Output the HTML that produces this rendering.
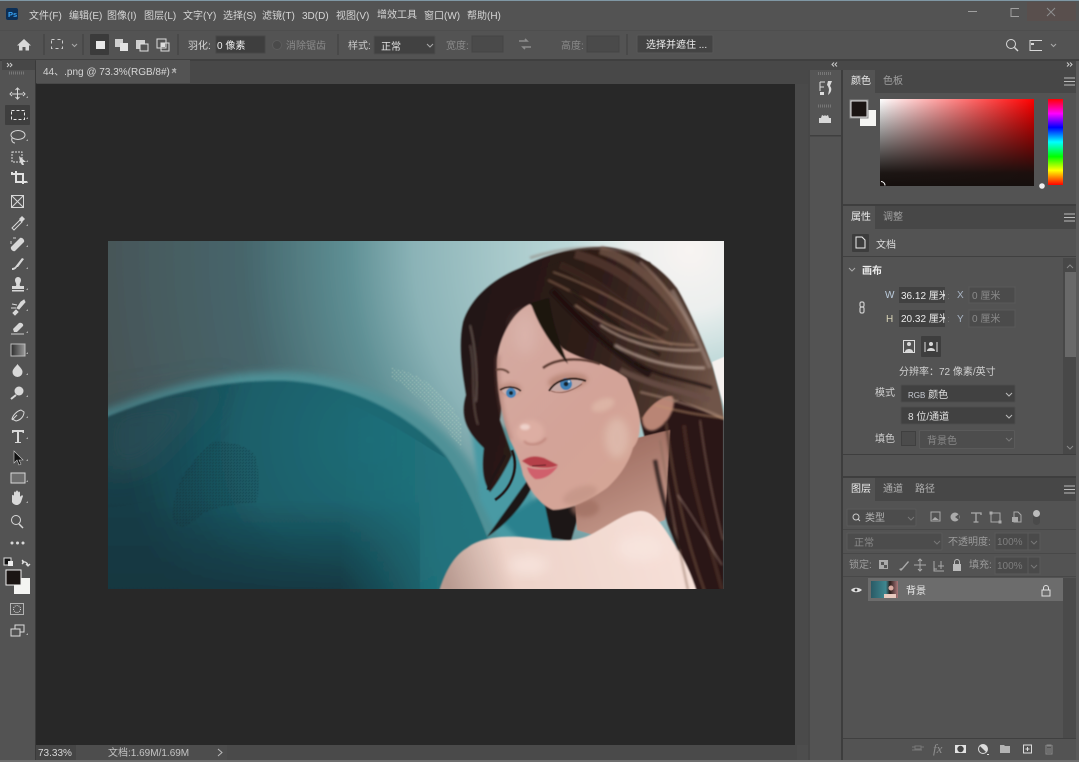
<!DOCTYPE html>
<html lang="zh"><head><meta charset="utf-8"><title>Photoshop</title>
<style>
html,body{margin:0;padding:0;background:#535353;overflow:hidden}
svg{display:block;position:absolute;left:0;top:0}
text{font-family:"Liberation Sans","Noto Sans CJK SC",sans-serif;font-size:10px;fill:#d6d6d6}
.d{fill:#8a8a8a}.w{fill:#ececec}
.s{fill:none;stroke:#d8d8d8;stroke-width:1}
.f{fill:#d8d8d8}
</style></head><body>
<svg width="1079" height="762" viewBox="0 0 1079 762" xmlns="http://www.w3.org/2000/svg">
<defs>
<clipPath id="c"><rect x="108" y="241" width="616" height="348"/></clipPath>
<radialGradient id="bg" gradientUnits="userSpaceOnUse" cx="690" cy="250" r="600">
<stop offset="0" stop-color="#f8f4f2"/><stop offset=".1" stop-color="#ecefee"/><stop offset=".2" stop-color="#bcd8d8"/><stop offset=".33" stop-color="#a4c6c8"/><stop offset=".46" stop-color="#8bb3b7"/><stop offset=".57" stop-color="#5e8f94"/><stop offset=".74" stop-color="#46666c"/><stop offset="1" stop-color="#465456"/></radialGradient>
<radialGradient id="bl" gradientUnits="userSpaceOnUse" cx="370" cy="440" r="250"><stop offset="0" stop-color="#1e6c76"/><stop offset=".5" stop-color="#1b5f6a"/><stop offset=".8" stop-color="#174a55"/><stop offset="1" stop-color="#143c46"/></radialGradient>
<linearGradient id="skin" x1="500" y1="340" x2="640" y2="480" gradientUnits="userSpaceOnUse"><stop offset="0" stop-color="#d4aaa1"/><stop offset=".55" stop-color="#d3a398"/><stop offset="1" stop-color="#d4a696"/></linearGradient>
<linearGradient id="sh" x1="450" y1="590" x2="670" y2="520" gradientUnits="userSpaceOnUse"><stop offset="0" stop-color="#b89a90"/><stop offset=".28" stop-color="#eed3c9"/><stop offset="1" stop-color="#f6e0d8"/></linearGradient>
<linearGradient id="neck" x1="600" y1="440" x2="640" y2="530" gradientUnits="userSpaceOnUse"><stop offset="0" stop-color="#9c6a5e"/><stop offset="1" stop-color="#c4988a"/></linearGradient>
<linearGradient id="hair" gradientUnits="userSpaceOnUse" x1="470" y1="300" x2="720" y2="360"><stop offset="0" stop-color="#231513"/><stop offset=".5" stop-color="#2f1e1a"/><stop offset=".8" stop-color="#4c362d"/><stop offset="1" stop-color="#705548"/></linearGradient>
<linearGradient id="gw" x1="880" y1="0" x2="1034" y2="0" gradientUnits="userSpaceOnUse"><stop offset="0" stop-color="#fff"/><stop offset="1" stop-color="#f00"/></linearGradient>
<linearGradient id="gb" x1="0" y1="99" x2="0" y2="186" gradientUnits="userSpaceOnUse"><stop offset="0" stop-color="#000" stop-opacity="0"/><stop offset=".85" stop-color="#150f0d" stop-opacity=".97"/><stop offset="1" stop-color="#150f0d"/></linearGradient>
<linearGradient id="hue" x1="0" y1="99" x2="0" y2="185" gradientUnits="userSpaceOnUse"><stop offset="0" stop-color="#f00"/><stop offset=".17" stop-color="#f0f"/><stop offset=".33" stop-color="#00f"/><stop offset=".5" stop-color="#0ff"/><stop offset=".67" stop-color="#0f0"/><stop offset=".83" stop-color="#ff0"/><stop offset="1" stop-color="#f00"/></linearGradient>
<linearGradient id="tg" x1="0" x2="1" y1="0" y2="0"><stop offset="0" stop-color="#2c2c2c"/><stop offset="1" stop-color="#9a9a9a"/></linearGradient>
<linearGradient id="th" x1="0" x2="1" y1="0" y2="0"><stop offset="0" stop-color="#2a5b66"/><stop offset=".55" stop-color="#3e8790"/><stop offset=".7" stop-color="#2c1e1c"/><stop offset="1" stop-color="#a8787a"/></linearGradient>
<linearGradient id="bot" x1="0" x2="0" y1="500" y2="589" gradientUnits="userSpaceOnUse"><stop offset="0" stop-color="#123640" stop-opacity="0"/><stop offset="1" stop-color="#123640" stop-opacity=".9"/></linearGradient>
<linearGradient id="rt" x1="340" x2="510" y1="0" y2="0" gradientUnits="userSpaceOnUse"><stop offset="0" stop-color="#22757f" stop-opacity="0"/><stop offset=".6" stop-color="#22757f" stop-opacity=".85"/><stop offset="1" stop-color="#22757f"/></linearGradient>
<filter id="b03" x="-5%" y="-5%" width="110%" height="110%"><feGaussianBlur stdDeviation=".4"/></filter>
<filter id="b1" x="-20%" y="-20%" width="140%" height="140%"><feGaussianBlur stdDeviation="1"/></filter>
<filter id="b05" x="-20%" y="-20%" width="140%" height="140%"><feGaussianBlur stdDeviation=".55"/></filter>
<filter id="b2" x="-30%" y="-30%" width="160%" height="160%"><feGaussianBlur stdDeviation="2.2"/></filter>
<filter id="b4" x="-50%" y="-50%" width="200%" height="200%"><feGaussianBlur stdDeviation="4"/></filter>
<filter id="b6" x="-30%" y="-30%" width="160%" height="160%"><feGaussianBlur stdDeviation="6"/></filter>
<filter id="b12" x="-30%" y="-30%" width="160%" height="160%"><feGaussianBlur stdDeviation="14"/></filter>
<pattern id="dots" width="4" height="4" patternUnits="userSpaceOnUse"><rect x="0" y="0" width="1" height="1" fill="#e4f4d4"/><rect x="2" y="2" width="1" height="1" fill="#c8f0c8"/></pattern>
<pattern id="dk" width="3" height="3" patternUnits="userSpaceOnUse"><rect width="1" height="1" fill="#14242a"/><rect x="2" y="1" width="1" height="1" fill="#172e34"/></pattern>
</defs>

<!-- window -->
<rect width="1079" height="762" fill="#535353"/>
<rect width="1079" height="1" fill="#7f97a4"/>
<rect x="0" y="59" width="1079" height="2" fill="#3f3f3f"/>
<rect x="0" y="30" width="1079" height="1" fill="#4e4e4e"/>

<!-- title bar -->
<rect x="6" y="8" width="12" height="12" rx="2" fill="#0c2f56"/>
<text x="8" y="17" style="font-size:7.5px;font-weight:bold;fill:#39a4f5">Ps</text>
<text x="29" y="19">文件(F)</text><text x="69" y="19">编辑(E)</text><text x="107" y="19">图像(I)</text><text x="144" y="19">图层(L)</text><text x="183" y="19">文字(Y)</text><text x="223" y="19">选择(S)</text><text x="262" y="19">滤镜(T)</text><text x="302" y="19">3D(D)</text><text x="336" y="19">视图(V)</text><text x="377" y="18">增效工具</text><text x="424" y="19">窗口(W)</text><text x="467" y="19">帮助(H)</text>
<path d="M968 11.500h9" stroke="#a0a0a0" fill="none"/>
<path d="M1019 8.500h-8v8h8" stroke="#a0a0a0" fill="none"/>
<rect x="1027" y="2" width="49" height="19" fill="#594f4d"/>
<path d="M1047 8l8 8M1055 8l-8 8" stroke="#8e8e8e" fill="none"/>

<!-- options bar -->
<path d="M24 39l7 6.500h-2v5h-3.500v-3.500h-3v3.500H19v-5h-2z" class="f"/>
<path d="M44 34v21" stroke="#3f3f3f"/>
<rect x="51.500" y="39.500" width="11" height="9" fill="none" stroke="#ccc" stroke-dasharray="3 3"/>
<path d="M72 44l2.500 2.500 2.500-2.500" fill="none" stroke="#aaa"/>
<path d="M83 34v21" stroke="#3f3f3f"/>
<rect x="90" y="34" width="19" height="21" rx="1" fill="#3b3b3b"/>
<rect x="96" y="41" width="9" height="8" fill="#e8e8e8"/>
<rect x="115" y="39" width="8" height="8" fill="#cfcfcf"/><rect x="120" y="43" width="8" height="8" fill="#e2e2e2"/>
<rect x="136" y="40" width="9" height="9" fill="#cfcfcf"/><rect x="140" y="44" width="8" height="7" fill="#535353" stroke="#e2e2e2"/>
<rect x="157" y="39" width="9" height="9" fill="none" stroke="#ddd"/><rect x="161" y="43" width="4" height="4" fill="#ddd"/><rect x="161" y="43" width="8" height="8" fill="none" stroke="#ddd"/>
<path d="M178 34v21" stroke="#3f3f3f"/>
<text x="188" y="49">羽化:</text>
<rect x="216" y="36" width="49" height="17" fill="#3e3e3e" stroke="#474747"/>
<text x="217" y="49" style="fill:#eee">0 像素</text>
<circle cx="277" cy="45" r="4.500" fill="#4a4a4a" stroke="#5c5c5c"/>
<text x="286" y="49" class="d">消除锯齿</text>
<path d="M338 34v21" stroke="#3f3f3f"/>
<text x="348" y="49" style="fill:#ccc">样式:</text>
<rect x="374" y="36" width="61" height="18" rx="1" fill="#414141" stroke="#4d4d4d"/>
<text x="381" y="50" style="fill:#e4e4e4">正常</text>
<path d="M427 44l3 3 3-3" fill="none" stroke="#aaa"/>
<text x="446" y="49" class="d">宽度:</text>
<rect x="472" y="36" width="31" height="16" fill="#4a4a4a" stroke="#444"/>
<path d="M519 41h8l-2-2M531 47h-8l2 2" stroke="#8c8c8c" fill="none" stroke-width="1.600"/>
<text x="561" y="49" class="d">高度:</text>
<rect x="587" y="36" width="32" height="16" fill="#4a4a4a" stroke="#444"/>
<path d="M627 34v21" stroke="#3f3f3f"/>
<rect x="637" y="35" width="76" height="18" rx="1" fill="#434343" stroke="#575757"/>
<text x="646" y="48" class="w">选择并遮住 ...</text>
<circle cx="1011" cy="44" r="4.500" class="s" stroke-width="1.200"/><path d="M1014.500 47.500l3.500 3.500" stroke="#d8d8d8" stroke-width="1.400"/>
<path d="M1042 40.500h-12v10h12" stroke="#d8d8d8" fill="none"/><path d="M1031 43h3v2h-3z" class="f"/>
<path d="M1051 44l2.500 2.500 2.500-2.500" fill="none" stroke="#aaa"/>

<!-- left tool panel -->
<rect x="0" y="61" width="35" height="701" fill="#535353"/>
<rect x="2" y="60" width="33" height="10" fill="#474747"/>
<path d="M7 63l2 2-2 2M10 63l2 2-2 2" stroke="#ccc" fill="none"/>
<path d="M9 73h15" stroke="#777" stroke-dasharray="1 1" stroke-width="3"/>
<rect x="35" y="61" width="2" height="701" fill="#3a3a3a"/>

<!-- document area -->
<rect x="37" y="61" width="771" height="23" fill="#484848"/>
<rect x="36" y="60" width="154" height="23" fill="#535353"/>
<text x="43" y="75">44、.png @ 73.3%(RGB/8#) *</text>
<path d="M172 69l4 4M176 69l-4 4" stroke="#aaa" fill="none"/>
<rect x="36" y="84" width="759" height="661" fill="#282828"/>
<rect x="795" y="84" width="13" height="661" fill="#4a4a4a"/>
<rect x="36" y="745" width="772" height="15" fill="#4d4d4d"/>
<rect x="36" y="745" width="40" height="15" fill="#454545"/>
<text x="38" y="756" style="fill:#d8d8d8">73.33%</text>
<text x="108" y="756" style="fill:#c4c4c4">文档:1.69M/1.69M</text>
<path d="M218 749l4 3.500-4 3.500" stroke="#bbb" fill="none"/>
<rect x="227" y="745" width="570" height="15" fill="#4a4a4a"/>
<rect x="0" y="760" width="1079" height="2" fill="#6d6d6d"/>

<!-- painting -->
<g clip-path="url(#c)"><g filter="url(#b03)">
<rect x="100" y="235" width="630" height="360" fill="url(#bg)"/>
<path d="M100 412C170 385 230 370 290 372C360 376 425 408 460 450C485 480 505 530 525 595H100Z" fill="#4f9197" filter="url(#b4)"/>
<path d="M100 420C170 390 230 379 290 381C355 386 410 415 445 455C470 490 490 540 505 595H100Z" fill="url(#bl)" filter="url(#b1)"/>
<path d="M100 405L230 385L150 470L100 480Z" fill="#34545c" opacity=".55" filter="url(#b12)"/>
<path d="M100 500H420V595H100Z" fill="url(#bot)"/>
<path d="M340 400C390 420 430 450 446 458C470 490 490 540 505 595H340Z" fill="url(#rt)"/>
<path d="M173 518C172 495 180 470 213 442C235 440 257 450 257 462C260 480 258 495 257 502C235 505 210 505 195 520C185 530 175 528 173 518Z" fill="url(#dk)" opacity=".75"/>
<path d="M392 368C420 372 450 395 462 425L462 450C440 420 420 395 392 378Z" fill="url(#dots)" opacity=".5"/>

<!-- teal showing between strands -->
<path d="M470 420L520 430L530 490L552 545L500 540L480 500Z" fill="#4a9aa4" filter="url(#b2)"/>
<path d="M500 520L550 490L556 540L520 540Z" fill="#2a818e" filter="url(#b2)"/>

<!-- hair mass -->
<g filter="url(#b05)">
<path d="M463 322C470 300 490 280 520 268C550 252 580 246 607 247C640 250 665 272 677 288C690 310 705 345 713 368C719 390 723 405 724 420V595H697C690 570 680 545 668 525L640 420L630 400L510 345L500 420L512 455C505 470 498 482 490 492C482 480 482 465 484 448C465 430 460 415 466 395C462 370 458 345 463 322Z" fill="url(#hair)"/>
<path d="M487 537C505 525 525 505 535 480L545 505L552 538L571 541L580 510L560 495L535 470Z" fill="#1f1413"/>
<path d="M640 420L668 525L697 595H724V420L680 400Z" fill="#2a1917"/>
</g>
<path d="M470 345C476 370 470 400 478 425" stroke="#5a4a44" stroke-width="2" fill="none" filter="url(#b1)"/>
<path d="M470 325C476 350 478 380 476 402" stroke="#7a6a62" stroke-width="1.500" fill="none" filter="url(#b1)"/>
<path d="M505 455C498 470 490 480 488 490M512 450C520 470 510 490 495 500" stroke="#241716" stroke-width="3" fill="none"/>
<path d="M530 258C560 248 600 243 640 255" stroke="#8a7a72" stroke-width="3" fill="none" opacity=".5" filter="url(#b1)"/>

<!-- neck & shoulder -->
<path d="M575 500L628 440L670 430L665 520L610 540L577 530Z" fill="url(#neck)"/>
<ellipse cx="585" cy="508" rx="14" ry="9" fill="#a06f62" opacity=".7" filter="url(#b2)"/>
<path d="M438 595C445 570 455 555 467 548C480 538 500 536 520 537C540 539 570 545 590 535C610 525 625 512 640 511C655 510 665 530 675 545C685 560 692 575 698 595Z" fill="url(#sh)" filter="url(#b05)"/>
<ellipse cx="528" cy="565" rx="20" ry="10" fill="#f9e8e2" opacity=".7" filter="url(#b6)"/>
<ellipse cx="640" cy="548" rx="24" ry="14" fill="#f9e8e2" opacity=".6" filter="url(#b6)"/>

<!-- face -->
<path d="M497 360C499 335 515 310 530 304C540 310 552 335 563 348C575 356 590 360 597 362C610 368 620 372 627 378C634 395 640 410 640 422C640 435 638 442 633 448C628 465 618 478 607 488C590 500 570 510 553 510C540 505 530 490 523 475C520 460 515 450 510 440C503 420 496 390 497 360Z" fill="url(#skin)" filter="url(#b05)"/>
<ellipse cx="617" cy="438" rx="12" ry="20" fill="#e4c8b9" opacity=".55" filter="url(#b4)"/>
<ellipse cx="603" cy="405" rx="12" ry="6" fill="#e2bfae" opacity=".6" transform="rotate(-20 603 405)" filter="url(#b2)"/>
<ellipse cx="580" cy="495" rx="18" ry="8" fill="#b98a7d" opacity=".45" transform="rotate(-20 580 495)" filter="url(#b2)"/>
<ellipse cx="525" cy="335" rx="12" ry="20" fill="#dcb6ae" opacity=".7" filter="url(#b6)"/>
<path d="M498 355C496 385 503 420 510 440" stroke="#9a6a5e" stroke-width="2.500" fill="none" opacity=".7" filter="url(#b2)"/>
<ellipse cx="530" cy="432" rx="14" ry="12" fill="#ddaea3" filter="url(#b2)"/>
<ellipse cx="525" cy="427" rx="5" ry="3" fill="#eed2ca" filter="url(#b1)"/>
<path d="M524 441C528 446 540 446 546 438" stroke="#b87c72" stroke-width="1.500" fill="none" filter="url(#b1)"/>
<!-- ear -->
<path d="M642 418C645 405 660 392 672 396C678 405 668 425 655 430C648 432 642 428 642 418Z" fill="#b98574" filter="url(#b1)"/>
<!-- brows & eye shadow -->
<path d="M543 368C556 358 580 357 600 364" stroke="#5a3a30" stroke-width="2.400" fill="none" filter="url(#b05)"/>
<path d="M496 370C501 368 506 370 509 373" stroke="#6a4a3e" stroke-width="2.200" fill="none" filter="url(#b05)"/>
<ellipse cx="568" cy="381" rx="20" ry="8" fill="#a87564" opacity=".55" transform="rotate(-6 568 381)" filter="url(#b2)"/>
<ellipse cx="510" cy="389" rx="11" ry="6" fill="#a87564" opacity=".5" filter="url(#b2)"/>
<!-- eyes -->
<path d="M551 390C556 381 570 378 583 381C578 389 562 393 551 390Z" fill="#c5a8a4"/>
<circle cx="566" cy="384" r="6" fill="#3c7fb4"/><circle cx="566" cy="384" r="2.300" fill="#12222c"/><circle cx="569" cy="381.500" r="1" fill="#cfe6f2"/>
<path d="M549 391C556 379 572 376 586 381" stroke="#2c1a16" stroke-width="2" fill="none"/>
<path d="M551 391C561 395 572 391 582 384" stroke="#7a4c40" stroke-width=".8" fill="none"/>
<path d="M502 391C506 387 514 387 519 391C516 397 507 398 502 391Z" fill="#c9aeaa"/>
<circle cx="511" cy="393" r="5" fill="#4484b8"/><circle cx="511" cy="393" r="2" fill="#16262f"/>
<path d="M500 390C506 386 515 386 521 391" stroke="#2c1a16" stroke-width="1.700" fill="none"/>
<!-- lips -->
<path d="M522 461C530 455 538 456 544 458L558 465C552 469 538 468 530 466Z" fill="#b5404a" filter="url(#b05)"/>
<path d="M527 467C535 470 550 470 558 466C552 475 543 480 535 479C531 476 528 472 527 467Z" fill="#d0606c" filter="url(#b05)"/>
<path d="M532 466L546 465" stroke="#5a1e22" stroke-width="1"/>

<!-- bangs/front hair -->
<path d="M525 300C540 306 552 335 563 348C575 356 590 360 597 362C610 368 620 372 627 378C632 388 638 405 642 418C650 405 665 392 680 396L700 345L650 262L590 250L535 272Z" fill="url(#hair)" filter="url(#b05)"/>
<path d="M531 303C538 325 552 345 568 364C558 340 552 320 549 298Z" fill="#1e1311" filter="url(#b05)"/>
<g fill="none" filter="url(#b1)" stroke-linecap="butt">
<path d="M600 250C640 262 672 295 696 340" stroke="#7e5f50" stroke-width="9" opacity=".65"/>
<path d="M575 254C615 265 650 290 680 330" stroke="#54392f" stroke-width="9" opacity=".8"/>
<path d="M560 265C595 280 630 305 662 335" stroke="#3c2620" stroke-width="8" opacity=".8"/>
<path d="M640 262C662 280 680 305 696 335" stroke="#a88878" stroke-width="2.500" opacity=".6"/>
<path d="M548 280C590 300 630 325 672 345" stroke="#7c5746" stroke-width="2" opacity=".9"/>
<path d="M553 272C590 285 625 305 668 330" stroke="#966f5a" stroke-width="1.500" opacity=".8"/>
<path d="M552 290C580 320 610 350 650 375" stroke="#1f1311" stroke-width="7" opacity=".85"/>
<path d="M570 290C600 310 625 335 660 355" stroke="#221512" stroke-width="3" opacity=".8"/>
<path d="M575 305C610 330 650 345 695 345" stroke="#a5836f" stroke-width="1.800" opacity=".9"/>
<path d="M600 325C630 345 665 352 700 350" stroke="#b79e90" stroke-width="2.200" opacity=".85"/>
<path d="M615 345C645 362 675 368 705 368" stroke="#c2aa9e" stroke-width="3" opacity=".7"/>
<path d="M620 370C650 385 680 390 710 400" stroke="#6a5048" stroke-width="6" opacity=".8"/>
<path d="M635 362C660 378 690 380 712 388" stroke="#1f1311" stroke-width="3" opacity=".85"/>
<path d="M640 392C665 398 695 405 723 418" stroke="#a98a78" stroke-width="2" opacity=".8"/>
<path d="M655 405C680 412 700 415 724 418" stroke="#c09470" stroke-width="1.500" opacity=".8"/>
<path d="M672 290C685 312 698 340 710 368" stroke="#a08a80" stroke-width="4" opacity=".6"/>
<path d="M666 422C672 470 682 530 706 595" stroke="#5c3e33" stroke-width="3" opacity=".8"/>
<path d="M660 440C668 490 675 530 688 590" stroke="#8d6d5c" stroke-width="1.500" opacity=".8"/>
<path d="M684 425C690 480 706 530 722 590" stroke="#4a2e26" stroke-width="4" opacity=".8"/>
<path d="M700 420C705 460 715 510 723 540" stroke="#9a7a68" stroke-width="1.200" opacity=".8"/>
<path d="M678 495C695 520 710 545 722 565" stroke="#c0a090" stroke-width=".8" opacity=".9"/>
<path d="M655 460C662 500 670 525 680 550" stroke="#261514" stroke-width="4" opacity=".85"/>
</g>
<path d="M712 362C718 385 722 400 726 412L726 356Z" fill="#f5f0ee"/>
</g></g>

<!-- tools -->
<g>
<rect x="5" y="105" width="25" height="20" rx="1" fill="#3e3e3e"/>
<path d="M12 94h11M17.500 88.500v11" stroke="#d8d8d8" fill="none"/><path d="M12 92l-2 2 2 2M23 92l2 2-2 2M15.500 90l2-2 2 2M15.500 97l2 2 2-2" stroke="#d8d8d8" fill="none"/>
<rect x="11.500" y="110.500" width="13" height="9" fill="none" stroke="#e8e8e8" stroke-dasharray="3 2"/>
<ellipse cx="18" cy="135" rx="7" ry="4.500" class="s" stroke-width="1.300"/><path d="M12 138c-1 3 1 5 3 5" class="s"/>
<rect x="12" y="152" width="10" height="10" fill="none" stroke="#ddd" stroke-dasharray="2 1"/><path d="M19 156l7 6-3 0 1 3-2 0-2-3z" class="f"/>
<path d="M12 172v2h11v10M16 171v11h11" fill="none" stroke="#e2e2e2" stroke-width="2"/>
<rect x="11.500" y="195.500" width="12" height="12" fill="none" stroke="#d8d8d8"/><path d="M11.500 195.500l12 12M23.500 195.500l-12 12" stroke="#d8d8d8"/>
<path d="M12 228l8-8 2 2-8 8z" fill="none" stroke="#d8d8d8"/><path d="M19 219l3-3 3 3-3 3z" class="f"/>
<path d="M11 247l9-9c2-1 5 2 4 4l-9 9c-2 1-5-2-4-4z" class="f"/><path d="M13 238h3M11 241v3" stroke="#ccc"/>
<path d="M22 258l2 1-6 8-3 0z" class="f"/><path d="M12 268c2 0 4-2 5-1-1 2-3 3-5 3z" class="f"/>
<path d="M15 280a3 3 0 016 0c0 3-2 3-1 6h4v3H12v-3h4c1-3-1-3-1-6z" class="f"/><rect x="12" y="290" width="12" height="1.500" class="f"/>
<path d="M21 302l3-2 1 2-6 7-2-1zM12 304l5 1M11 308l5 0M13 313l3-3 2 2-3 3z" stroke="#d8d8d8" fill="#d8d8d8"/>
<path d="M13 329l6-6c2-1 5 1 4 3l-6 6h-3z" class="f"/><path d="M11 334h13" stroke="#ccc"/>
<rect x="11" y="344" width="14" height="12" fill="url(#tg)" stroke="#bbb"/>
<path d="M17.500 364c2 3 5 5 5 8a5 5 0 01-10 0c0-3 3-5 5-8z" class="f"/>
<circle cx="19" cy="391" r="4.500" class="f"/><path d="M16 395l-5 4" stroke="#d8d8d8" stroke-width="2"/>
<path d="M12 419c1-4 5-8 9-9l3 2c0 4-3 8-8 9z" class="s"/><path d="M12 420l5-5" class="s"/>
<path d="M12 430h12v3h-1l-1-1h-3v10h2v1h-6v-1h2v-10h-3l-1 1h-1z" class="f"/>
<path d="M14 451v12l3-3 2 5 2-1-2-4h4z" fill="#111" stroke="#ccc" stroke-width=".6"/>
<rect x="11" y="473" width="14" height="10" fill="#6d6d6d" stroke="#d8d8d8"/>
<path d="M12 498v-2c0-2 2-1 2 0v-3c0-2 2-2 2 0v-1c0-2 2-2 2 0v1c0-2 2-2 2 0v4c1-2 3-2 3-1l-2 6c-1 2-3 3-4 3-2 0-4-1-5-3z" class="f"/>
<circle cx="16" cy="520" r="4.500" class="s" stroke-width="1.200"/><path d="M19 524l4 4" stroke="#d8d8d8" stroke-width="1.500"/>
<circle cx="12" cy="543" r="1.500" class="f"/><circle cx="17.500" cy="543" r="1.500" class="f"/><circle cx="23" cy="543" r="1.500" class="f"/>
<rect x="4" y="558" width="7" height="7" fill="#111" stroke="#ddd"/><rect x="8" y="561" width="5" height="5" fill="#eee"/>
<path d="M22 562c3-1 6 1 6 4M26 564l2 2 2-2M22 560l2 2-2 2" stroke="#ddd" fill="none" stroke-width="1.300"/>
<rect x="14" y="578" width="16" height="16" fill="#f4f4f2"/>
<rect x="6" y="570" width="15" height="15" fill="#1b1513" stroke="#efefef"/>
<rect x="10.500" y="603.500" width="13" height="11" fill="none" stroke="#ccc" stroke-width=".8"/><circle cx="17" cy="609" r="3.500" fill="none" stroke="#ddd" stroke-dasharray="1 1"/>
<rect x="15" y="625" width="9" height="7" fill="none" stroke="#ddd"/><rect x="11" y="629" width="9" height="7" fill="#535353" stroke="#ddd"/>
<g fill="#aaa"><path d="M26 98h2v-2zM26 119h2v-2zM26 141h2v-2zM26 162h2v-2zM26 183h2v-2zM26 226h2v-2zM26 247h2v-2zM26 269h2v-2zM26 290h2v-2zM26 311h2v-2zM26 333h2v-2zM26 354h2v-2zM26 375h2v-2zM26 397h2v-2zM26 418h2v-2zM26 439h2v-2zM26 461h2v-2zM26 482h2v-2zM26 503h2v-2zM26 635h2v-2z"/></g>
</g>

<!-- collapsed dock -->
<rect x="808" y="61" width="271" height="9" fill="#484848"/>
<path d="M837 62.500l-2 2 2 2M834 62.500l-2 2 2 2M1067 62.500l2 2-2 2M1070 62.500l2 2-2 2" stroke="#ccc" fill="none"/>
<rect x="808" y="70" width="2" height="690" fill="#474747"/>
<rect x="810" y="70" width="31" height="66" fill="#555"/>
<rect x="810" y="135" width="31" height="1.500" fill="#3f3f3f"/>
<path d="M818 73.500h13M818 106h13" stroke="#777" stroke-dasharray="1 1" stroke-width="3"/>
<path d="M820 82h5M820 82v5M820 87h4M820 87v4" stroke="#ddd" fill="none"/><rect x="820" y="92" width="4" height="3" fill="#ddd"/>
<path d="M828 81h4l-2 5c2 2 2 6-2 9l1-5c0-2-1-4-2-5z" class="f"/>
<path d="M821 118l1-3 2 1 1-1 1 1 2-1 1 3 2 0v5h-12v-5z" class="f"/>
<rect x="841" y="70" width="2" height="690" fill="#3d3d3d"/>

<!-- Color panel -->
<rect x="843" y="70" width="233" height="23" fill="#474747"/>
<rect x="843" y="70" width="32" height="23" fill="#535353"/>
<text x="851" y="84" class="w">颜色</text><text x="883" y="84" style="fill:#a0a0a0">色板</text>
<path d="M1064 78h11M1064 81.500h11M1064 85h11" stroke="#bbb"/>
<rect x="860" y="110" width="16" height="16" fill="#f4f4f2"/>
<rect x="851" y="101" width="16" height="16" fill="#1b1513" stroke="#e4e4e4"/>
<rect x="850" y="100" width="18" height="18" fill="none" stroke="#888"/>
<rect x="880" y="99" width="154" height="87" fill="url(#gw)"/>
<rect x="880" y="99" width="154" height="87" fill="url(#gb)"/>
<path d="M881 181.500a4 4 0 014 4" fill="none" stroke="#fff"/>
<rect x="1048" y="99" width="15" height="86" fill="url(#hue)"/>
<circle cx="1042" cy="186" r="2.800" fill="#eee"/>
<rect x="843" y="204" width="233" height="2" fill="#3e3e3e"/>

<!-- Properties panel -->
<rect x="843" y="206" width="233" height="23" fill="#474747"/>
<rect x="843" y="206" width="32" height="23" fill="#535353"/>
<text x="851" y="220" class="w">属性</text><text x="883" y="220" style="fill:#a0a0a0">调整</text>
<path d="M1064 214h11M1064 217.500h11M1064 221h11" stroke="#bbb"/>
<rect x="852" y="234" width="17" height="18" rx="1" fill="#3d3d3d"/>
<path d="M856 237h6l3 3v8h-9z" fill="none" stroke="#eee"/>
<text x="876" y="248" style="fill:#dcdcdc">文档</text>
<rect x="843" y="256" width="233" height="1" fill="#404040"/>
<path d="M849 268l3 3 3-3" fill="none" stroke="#aaa"/>
<text x="862" y="274" class="w" style="font-weight:bold">画布</text>
<text x="885" y="298" style="fill:#bcd">W</text>
<rect x="899" y="287" width="46" height="16" fill="#414141"/>
<text x="901" y="299" style="fill:#ececec">36.12 厘米</text>
<rect x="945" y="287" width="3" height="16" fill="#535353"/>
<text x="957" y="298" style="fill:#a8b4c4">X</text>
<rect x="969" y="287" width="46" height="16" fill="#4b4b4b" stroke="#5a5a5a"/>
<text x="972" y="299" class="d">0 厘米</text>
<text x="886" y="322" style="fill:#d8d4b8">H</text>
<rect x="899" y="310" width="46" height="17" fill="#414141"/>
<text x="901" y="322" style="fill:#ececec">20.32 厘米</text>
<rect x="945" y="310" width="3" height="17" fill="#535353"/>
<text x="957" y="322" style="fill:#a8b4c4">Y</text>
<rect x="969" y="310" width="46" height="17" fill="#4b4b4b" stroke="#5a5a5a"/>
<text x="972" y="322" class="d">0 厘米</text>
<rect x="860" y="302" width="4" height="5" rx="1.500" fill="none" stroke="#ccc" stroke-width="1.200"/><rect x="860" y="307" width="4" height="6" rx="1.500" fill="none" stroke="#ccc" stroke-width="1.200"/>
<rect x="903.500" y="340.500" width="11" height="12" fill="none" stroke="#ddd"/><circle cx="909" cy="344" r="2" class="f"/><path d="M905 352c0-4 8-4 8 0z" class="f"/>
<rect x="921" y="336" width="20" height="21" rx="1" fill="#3e3e3e"/>
<path d="M925 342v10M937 342v10" stroke="#ddd"/><circle cx="931" cy="344" r="2" class="f"/><path d="M927 351c0-4 8-4 8 0z" class="f"/>
<text x="899" y="375" style="fill:#d0d0d0">分辨率：72 像素/英寸</text>
<text x="875" y="396" style="fill:#d0d0d0">模式</text>
<rect x="901" y="385" width="114" height="17" rx="1" fill="#414141" stroke="#4c4c4c"/>
<text x="908" y="398" style="fill:#e0e0e0"><tspan style="font-size:8px;fill:#c8ccd4">RGB</tspan> 颜色</text>
<path d="M1006 393l3 3 3-3" fill="none" stroke="#bbb"/>
<rect x="901" y="407" width="114" height="17" rx="1" fill="#414141" stroke="#4c4c4c"/>
<text x="908" y="420" style="fill:#e0e0e0">8 位/通道</text>
<path d="M1006 415l3 3 3-3" fill="none" stroke="#bbb"/>
<text x="875" y="442" style="fill:#d0d0d0">填色</text>
<rect x="901.500" y="431.500" width="14" height="14" fill="#4b4b4b" stroke="#3f3f3f"/>
<rect x="919.500" y="430.500" width="95" height="18" rx="1" fill="#4d4d4d" stroke="#5a5a5a"/>
<text x="927" y="444" class="d">背景色</text>
<path d="M1006 438l3 3 3-3" fill="none" stroke="#777"/>
<rect x="1063" y="258" width="13" height="196" fill="#484848"/>
<rect x="1065" y="272" width="11" height="85" fill="#696969"/>
<path d="M1067 268l3-3 3 3M1067 446l3 3 3-3" fill="none" stroke="#888"/>
<rect x="843" y="454" width="233" height="1" fill="#3e3e3e"/>
<rect x="843" y="476" width="233" height="2" fill="#3e3e3e"/>

<!-- Layers panel -->
<rect x="843" y="478" width="233" height="23" fill="#474747"/>
<rect x="843" y="478" width="32" height="23" fill="#535353"/>
<text x="851" y="492" class="w">图层</text><text x="883" y="492" style="fill:#b0b0b0">通道</text><text x="915" y="492" style="fill:#b0b0b0">路径</text>
<path d="M1064 486h11M1064 489.500h11M1064 493h11" stroke="#bbb"/>
<rect x="847" y="509" width="69" height="17" rx="1" fill="#4c4c4c" stroke="#5a5a5a"/>
<circle cx="856" cy="517" r="3" fill="none" stroke="#ccc"/><path d="M858 519l2 2" stroke="#ccc"/>
<text x="865" y="521" style="fill:#b4b4b4">类型</text>
<path d="M908 517l3 3 3-3" fill="none" stroke="#777"/>
<rect x="931" y="512" width="9" height="9" fill="none" stroke="#aaa"/><path d="M932 520l3-3 4 3z" fill="#aaa"/>
<circle cx="955" cy="517" r="4.500" fill="#aaa"/><path d="M955 517l4-3v6z" fill="#535353"/>
<path d="M971 513h10v2M976 513v9M973.500 522h5" stroke="#aaa" fill="none" stroke-width="1.300"/>
<rect x="991" y="513" width="9" height="9" fill="none" stroke="#aaa"/><rect x="989.500" y="511.500" width="3" height="3" fill="#aaa"/><rect x="998.500" y="520.500" width="3" height="3" fill="#aaa"/>
<path d="M1014 512h4l3 3v7h-7z" fill="none" stroke="#aaa"/><rect x="1012" y="517" width="6" height="5" fill="#aaa"/>
<rect x="1033" y="510" width="7" height="15" rx="3.500" fill="#4a4a4a"/><circle cx="1036.500" cy="513.500" r="3.500" fill="#bbb"/>
<rect x="843" y="529" width="233" height="1" fill="#484848"/>
<rect x="847" y="533" width="95" height="17" rx="1" fill="#4c4c4c" stroke="#5a5a5a"/>
<text x="854" y="546" class="d">正常</text>
<path d="M934 541l3 3 3-3" fill="none" stroke="#777"/>
<text x="948" y="545" style="fill:#9c9c9c">不透明度:</text>
<rect x="995" y="533" width="33" height="17" fill="#4a4a4a" stroke="#5a5a5a"/>
<text x="997" y="545" style="fill:#7e7e7e">100%</text>
<rect x="1028" y="533" width="12" height="17" fill="#4a4a4a" stroke="#5a5a5a"/><path d="M1031 541l3 3 3-3" fill="none" stroke="#777"/>
<rect x="843" y="553" width="233" height="1" fill="#484848"/>
<text x="849" y="568" style="fill:#9c9c9c">锁定:</text>
<rect x="879" y="560" width="9" height="9" fill="#aaa"/><rect x="881" y="562" width="3" height="3" fill="#555"/><rect x="884" y="565" width="3" height="3" fill="#555"/>
<path d="M899 569l3-1 6-7 1 1-6 7-2 2z" fill="#aaa"/>
<path d="M920 559v12M914 565h12M918 561l2-2 2 2M918 569l2 2 2-2" stroke="#aaa" fill="none"/>
<path d="M934 561v10h10M934 569h3M941 561v8M938 566h6" stroke="#aaa" fill="none"/>
<rect x="953" y="564" width="8" height="7" fill="#bbb"/><path d="M954.500 564v-2a2.500 2.500 0 015 0v2" fill="none" stroke="#bbb"/>
<text x="969" y="568" style="fill:#9c9c9c">填充:</text>
<rect x="995" y="557" width="33" height="17" fill="#4a4a4a" stroke="#5a5a5a"/>
<text x="997" y="569" style="fill:#7e7e7e">100%</text>
<rect x="1028" y="557" width="12" height="17" fill="#4a4a4a" stroke="#5a5a5a"/><path d="M1031 565l3 3 3-3" fill="none" stroke="#777"/>
<rect x="843" y="576" width="233" height="1" fill="#484848"/>
<path d="M851 590c2-3 8-3 11 0-3 3-9 3-11 0z" fill="#e0e0e0"/><circle cx="856" cy="590" r="1.400" fill="#3a3a3a"/>
<rect x="868" y="578" width="195" height="23" fill="#6c6c6c"/>
<rect x="871" y="581" width="27" height="17" fill="url(#th)"/>
<circle cx="891" cy="588" r="2.500" fill="#d8aba1"/><rect x="884" y="594" width="12" height="4" fill="#e8cabf"/>
<text x="906" y="594" class="w">背景</text>
<rect x="1042" y="590" width="8" height="6" fill="none" stroke="#e0e0e0"/><path d="M1043.500 590v-2a2.500 2.500 0 015 0v2" fill="none" stroke="#e0e0e0"/>
<rect x="1063" y="578" width="13" height="160" fill="#4a4a4a"/>
<rect x="843" y="738" width="233" height="1" fill="#404040"/>

<!-- layer footer -->
<path d="M912 747h3M921 747h3M912 750h10" stroke="#777" fill="none"/><rect x="915" y="746" width="6" height="3" fill="none" stroke="#777"/>
<text x="933" y="753" style="font-family:'Liberation Serif',serif;font-style:italic;font-size:13px;fill:#8f8f8f">fx</text>
<rect x="955" y="745" width="11" height="8" fill="#e2e2e2"/><ellipse cx="960.500" cy="749" rx="3.200" ry="3.200" fill="#444"/>
<circle cx="983" cy="749" r="4.500" fill="none" stroke="#ddd"/><path d="M983 744.500a4.500 4.500 0 010 9z" fill="#ddd" transform="rotate(-45 983 749)"/><rect x="987" y="754" width="2" height="1" fill="#ddd"/>
<path d="M1000 745h4l1 1h5v7h-10z" fill="#b4b4b4"/>
<rect x="1023.500" y="745" width="8" height="8" fill="none" stroke="#ddd"/><path d="M1027.500 747v4M1025.500 749h4" stroke="#ddd"/>
<path d="M1045 746h8M1047 746v-1h4v1M1046 747v7h6v-7M1048 748v5M1050 748v5" stroke="#888" fill="none"/>
<rect x="1076" y="61" width="3" height="699" fill="#5a5a5a"/>
</svg>
</body></html>
